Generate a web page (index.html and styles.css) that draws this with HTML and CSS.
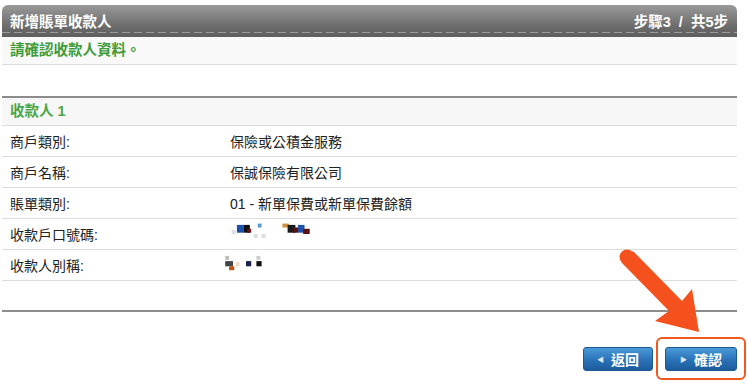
FILE: index.html
```html
<!DOCTYPE html>
<html lang="zh-Hant">
<head>
  <meta charset="UTF-8">
  <title>新增賬單收款人</title>
  <link rel="stylesheet" href="styles.css">
</head>
<body>
  <div class="page">
    <div class="title-bar">
      <span>新增賬單收款人</span>
      <span>步驟3 &nbsp;/&nbsp; 共5步</span>
    </div>
    <div class="notice">請確認收款人資料。</div>

    <div class="section">
      <div class="section-head">收款人 1</div>
      <div class="row"><span class="label">商戶類別:</span><span class="value">保險或公積金服務</span></div>
      <div class="row"><span class="label">商戶名稱:</span><span class="value">保誠保險有限公司</span></div>
      <div class="row"><span class="label">賬單類別:</span><span class="value">01 - 新單保費或新單保費餘額</span></div>
      <div class="row">
        <span class="label">收款戶口號碼:</span>
        <span class="value">
          <svg class="mask" width="130" height="26" viewBox="0 0 100 20">
            <rect x="9" y="7" width="3" height="3" fill="#ddd"/>
            <rect x="13" y="3" width="5" height="6" fill="#1f4fa8"/>
            <rect x="18" y="3" width="5" height="6" fill="#111"/>
            <rect x="21" y="6" width="3" height="3" fill="#6a1010"/>
            <rect x="29" y="2" width="3" height="3" fill="#5a9ad8"/>
            <rect x="26" y="10" width="3" height="3" fill="#ddd"/>
            <rect x="32" y="10" width="3" height="3" fill="#ddd"/>
            <rect x="48" y="2" width="5" height="3" fill="#d09040"/>
            <rect x="52" y="3" width="6" height="6" fill="#1a1a1a"/>
            <rect x="56" y="5" width="4" height="4" fill="#5a1010"/>
            <rect x="60" y="3" width="5" height="6" fill="#1f4fa8"/>
            <rect x="64" y="6" width="5" height="4" fill="#5a1010"/>
          </svg>
        </span>
      </div>
      <div class="row">
        <span class="label">收款人別稱:</span>
        <span class="value">
          <svg class="mask" width="130" height="26" viewBox="0 0 100 20">
            <rect x="4" y="3" width="3" height="3" fill="#bbb"/>
            <rect x="4" y="7" width="6" height="4" fill="#444"/>
            <rect x="7" y="11" width="4" height="3" fill="#c05010"/>
            <rect x="12" y="8" width="3" height="3" fill="#f0d8c0"/>
            <rect x="20" y="7" width="4" height="4" fill="#1a2050"/>
            <rect x="28" y="3" width="3" height="3" fill="#ccc"/>
            <rect x="28" y="7" width="4" height="4" fill="#111"/>
          </svg>
        </span>
      </div>
    </div>

    <div class="section end"></div>

    <div class="actions">
      <button class="btn back"><span class="tri">&#9664;</span>返回</button>
      <span class="highlight">
        <button class="btn next"><span class="tri">&#9654;</span>確認</button>
      </span>
    </div>
  </div>

  <svg class="arrow" width="748" height="388" viewBox="0 0 748 388">
    <polygon fill="#f4511e" points="622,263 633,251 682,301 692,289 699,332 655,321 669,311"/>
    <circle cx="627" cy="257" r="7.5" fill="#f4511e"/>
  </svg>
</body>
</html>
```

FILE: styles.css
```css
body {
  margin: 0;
  background: white;
  color: #222;
  font-family: 'Liberation Sans', 'Noto Sans CJK TC', sans-serif;
  font-size: 14px;
}
.page {
  width: 735px;
  margin: 5px 0 0 2px;
}
.title-bar {
  display: flex;
  justify-content: space-between;
  align-items: center;
  height: 32px;
  padding: 0 9px 2px 8px;
  box-sizing: border-box;
  border-radius: 6px 6px 0 0;
  color: white;
  font-size: 14.5px;
  font-weight: bold;
  background:
    repeating-linear-gradient(90deg, rgba(255,255,255,0.35) 0 8px, transparent 8px 12px) left 27px / 100% 1px no-repeat,
    linear-gradient(#9a9a9a, #6a6a6a 70%, #5e5e5e);
}
.notice {
  height: 27px;
  line-height: 27px;
  padding-left: 8px;
  background: #f9f9f9;
  border-bottom: 1px solid #dcdcdc;
  color: #3c9c3c;
  font-size: 14.5px;
  font-weight: bold;
}
.section {
  margin-top: 31px;
  border-top: 2px solid #8c8c8c;
}
.section.end {
  margin-top: 29px;
}
.section-head {
  height: 27px;
  line-height: 27px;
  padding-left: 8px;
  background: #f7f7f7;
  border-bottom: 1px solid #dcdcdc;
  color: #4aa64a;
  font-size: 14.5px;
  font-weight: bold;
}
.row {
  display: flex;
  align-items: center;
  height: 30px;
  border-bottom: 1px solid #dcdcdc;
}
.label {
  width: 220px;
  padding-left: 8px;
}
.value {
  display: flex;
  align-items: center;
}
.mask {
  display: block;
  margin-left: -10px;
}
.actions {
  display: flex;
  justify-content: flex-end;
  align-items: center;
  gap: 3px;
  margin-top: 25px;
}
.btn {
  display: flex;
  align-items: center;
  justify-content: center;
  height: 24px;
  border: 1px solid #1d5a94;
  border-radius: 3px;
  background: linear-gradient(#4a9ad8, #2a72b8 55%, #1c5c9c);
  color: white;
  font-family: inherit;
  font-size: 14px;
  font-weight: bold;
  padding: 0;
}
.tri {
  font-size: 7px;
  color: #dce8f4;
  margin-right: 7px;
}
.btn.back {
  width: 70px;
}
.btn.next {
  width: 72px;
}
.highlight {
  display: flex;
  padding: 8px 7px 7px 7px;
  border: 2.5px solid #f0581e;
  border-radius: 6px;
  margin-right: -9px;
}
.arrow {
  position: absolute;
  left: 0;
  top: 0;
  pointer-events: none;
}
```
